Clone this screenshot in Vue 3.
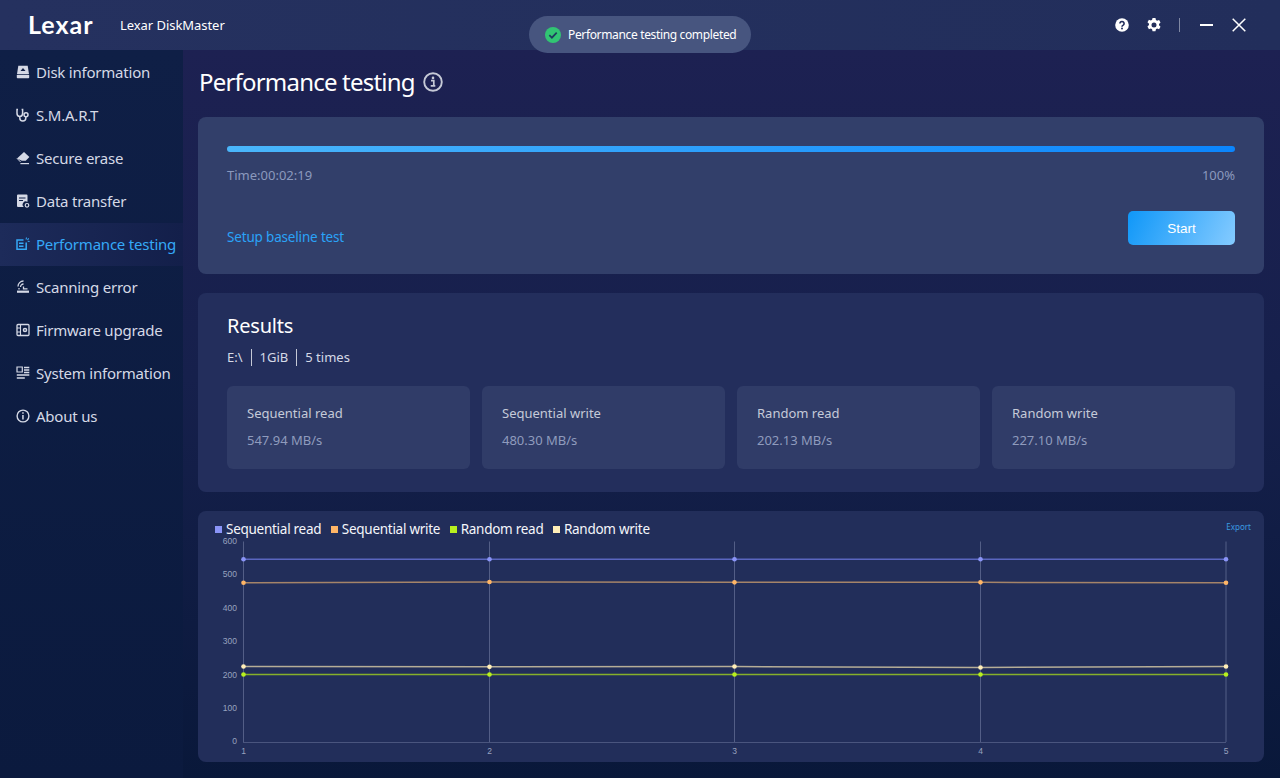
<script setup>
const navItems = [
  { label: 'Disk information', icon: 'disk' },
  { label: 'S.M.A.R.T', icon: 'steth' },
  { label: 'Secure erase', icon: 'erase' },
  { label: 'Data transfer', icon: 'doc' },
  { label: 'Performance testing', icon: 'perf', active: true },
  { label: 'Scanning error', icon: 'scan' },
  { label: 'Firmware upgrade', icon: 'chip' },
  { label: 'System information', icon: 'sys' },
  { label: 'About us', icon: 'info' },
]
const stats = [
  { label: 'Sequential read', value: '547.94 MB/s' },
  { label: 'Sequential write', value: '480.30 MB/s' },
  { label: 'Random read', value: '202.13 MB/s' },
  { label: 'Random write', value: '227.10 MB/s' },
]
const xs = [45.5, 291.5, 536.5, 782.5, 1028]
const y = (v) => 231 - (v * 200.4) / 600
const series = [
  { name: 'Sequential read', color: '#8a94f7', line: '#5a66c0', vals: [547, 547, 547, 547, 547] },
  { name: 'Sequential write', color: '#ffb566', line: '#a58469', vals: [477, 479, 478, 478, 477] },
  { name: 'Random read', color: '#b8f01e', line: '#86b02a', vals: [202, 202, 202, 202, 202] },
  { name: 'Random write', color: '#ffeeb8', line: '#b5ad97', vals: [226, 225, 226, 223, 226] },
]
const pts = (s) => s.vals.map((v, i) => `${xs[i]},${y(v)}`).join(' ')
const yTicks = [0, 100, 200, 300, 400, 500, 600]
</script>

<template>
  <div class="app">
    <header class="topbar">
      <div class="brand">
        <span class="logo">Lexar</span>
        <span class="appname">Lexar DiskMaster</span>
      </div>
      <div class="controls">
        <svg class="ctl" width="14" height="14" viewBox="0 0 14 14">
          <circle cx="7" cy="7" r="6.8" fill="#fff" />
          <path d="M4.900 5.400a2.100 2 0 1 1 3.300 1.700c-.8.500-1.200.9-1.200 1.600" fill="none" stroke="#232f5c" stroke-width="1.600" />
          <circle cx="7" cy="10.600" r="1" fill="#232f5c" />
        </svg>
        <svg class="ctl gear" width="14" height="14" viewBox="0 0 24 24">
          <path fill="#fff" fill-rule="evenodd" d="M9.500 0h5l.8 3.400 2 1.100 3.400-1 2.500 4.300-2.600 2.400v2.300l2.600 2.400-2.500 4.300-3.400-1-2 1.100-.8 3.400h-5l-.8-3.400-2-1.100-3.400 1L.8 14.500l2.600-2.400V9.800L.8 7.400l2.500-4.300 3.400 1 2-1.100zM12 7.500a4.300 4.300 0 1 0 0 8.600 4.300 4.300 0 0 0 0-8.600z" />
        </svg>
        <span class="sep"></span>
        <span class="minimize"></span>
        <svg width="14" height="14" viewBox="0 0 14 14" class="close">
          <path d="M.7.7l12.600 12.600M13.300.7L.7 13.300" stroke="#fff" stroke-width="1.500" fill="none" />
        </svg>
      </div>
    </header>

    <div class="toast">
      <svg width="16" height="16" viewBox="0 0 16 16">
        <circle cx="8" cy="8" r="8" fill="#31c573" />
        <path d="M4.300 8.200l2.600 2.500 4.800-5" stroke="#1f3b5f" stroke-width="1.700" fill="none" />
      </svg>
      <span>Performance testing completed</span>
    </div>

    <div class="body">
      <nav class="sidebar">
        <a v-for="item in navItems" :key="item.label" class="nav-item" :class="{ active: item.active }">
          <svg class="nav-icon" width="14" height="14" viewBox="0 0 14 14">
            <template v-if="item.icon === 'disk'">
              <path d="M2.300.8h9.400l1.300 8.200H1z" fill="currentColor" />
              <path d="M7 3l2.500 3h-5z" fill="#0f1e45" />
              <rect x=".8" y="9.800" width="12.400" height="3.500" rx=".8" fill="currentColor" />
            </template>
            <template v-else-if="item.icon === 'steth'">
              <path d="M2 1.500H1v3.800c0 1.900 1.300 3.200 2.800 3.200s2.800-1.300 2.800-3.200V1.500h-1M3.800 8.500v1.500c0 1.900 1.300 3 3 3s3-1.200 3-3V8.300" fill="none" stroke="currentColor" stroke-width="1.500" />
              <circle cx="10" cy="6.700" r="2" fill="none" stroke="currentColor" stroke-width="1.500" />
            </template>
            <template v-else-if="item.icon === 'erase'">
              <path d="M8 1l5.400 5-3.700 3.800H5.800L1 7.400z" fill="currentColor" />
              <path d="M4.400 12.600h8.600" stroke="currentColor" stroke-width="1.200" />
              <path d="M1 7.400l3.600 3.600" stroke="currentColor" stroke-width="1" />
            </template>
            <template v-else-if="item.icon === 'doc'">
              <path d="M1 1.500a1 1 0 0 1 1-1h8.500a1 1 0 0 1 1 1v6.300a3.200 3.200 0 0 0-3.700 5.200H2a1 1 0 0 1-1-1z" fill="currentColor" />
              <path d="M3 4h6.500M3 6.500h4" stroke="#0f1e45" stroke-width="1.100" />
              <circle cx="11" cy="11.300" r="1.800" fill="none" stroke="currentColor" stroke-width="1.200" />
            </template>
            <template v-else-if="item.icon === 'perf'">
              <path d="M10.200 5.500v6.800H1V3h6.500" fill="none" stroke="currentColor" stroke-width="1.500" />
              <path d="M3 5.500h4.500v1.400H3zM3 8.500h4.500v1.400H3z" fill="currentColor" />
              <path d="M10.500.5l-.4 2M12.700 1.400l-1.200 1.500M13.600 4.500l-1.900-.2" stroke="currentColor" stroke-width="1.100" />
            </template>
            <template v-else-if="item.icon === 'scan'">
              <path d="M1 12.800h12v-2.200H1z" fill="currentColor" />
              <path d="M3 9.500V8M2 6.500a5.500 5.500 0 0 1 5.500-5.500M4.500 7a3 3 0 0 1 3-3M7.500 6.500v2.300h4" fill="none" stroke="currentColor" stroke-width="1.300" />
            </template>
            <template v-else-if="item.icon === 'chip'">
              <rect x="1" y="1.500" width="12" height="11" rx="1" fill="none" stroke="currentColor" stroke-width="1.300" />
              <path d="M1 5h3.500M1 9h3.500M4.500 1.500v11" stroke="currentColor" stroke-width="1.100" />
              <circle cx="9" cy="7" r="2.300" fill="currentColor" />
              <circle cx="9" cy="7" r=".8" fill="#0f1e45" />
            </template>
            <template v-else-if="item.icon === 'sys'">
              <path d="M1 1h5.300v5H1z" fill="none" stroke="currentColor" stroke-width="1.200" />
              <path d="M8 1.500h5.300M8 4h5.300M8 6.500h5.300M.8 9h12.500M.8 12h8" stroke="currentColor" stroke-width="1.300" />
            </template>
            <template v-else>
              <circle cx="7" cy="7" r="5.900" fill="none" stroke="currentColor" stroke-width="1.400" />
              <path d="M6.200 6h1.500v4.500H6.200zM6.200 3.300h1.500v1.500H6.200z" fill="currentColor" />
            </template>
          </svg>
          <span>{{ item.label }}</span>
        </a>
      </nav>

      <main class="main">
        <div class="page-title">
          <h1>Performance testing</h1>
          <svg width="20" height="20" viewBox="0 0 20 20">
            <circle cx="10" cy="10" r="8.800" fill="none" stroke="#c5c9d6" stroke-width="1.900" />
            <path d="M8 8.700h2.800v4.800M7.700 13.800h4.600" fill="none" stroke="#c5c9d6" stroke-width="1.700" />
            <circle cx="10" cy="5.900" r="1.300" fill="#c5c9d6" />
          </svg>
        </div>

        <section class="card progress-card">
          <div class="bar"></div>
          <div class="bar-meta">
            <span>Time:00:02:19</span>
            <span>100%</span>
          </div>
          <div class="actions">
            <a class="link">Setup baseline test</a>
            <button class="start">Start</button>
          </div>
        </section>

        <section class="card results">
          <h2>Results</h2>
          <div class="meta">
            <span>E:\</span><span>1GiB</span><span>5 times</span>
          </div>
          <div class="stats">
            <div v-for="s in stats" :key="s.label" class="stat">
              <div class="stat-label">{{ s.label }}</div>
              <div class="stat-value">{{ s.value }}</div>
            </div>
          </div>
        </section>

        <section class="card chart">
          <div class="legend">
            <span v-for="s in series" :key="s.name" class="legend-item">
              <i class="swatch" :style="{ background: s.color }"></i>{{ s.name }}
            </span>
          </div>
          <a class="export">Export</a>
          <svg class="plot" width="1066" height="251" viewBox="0 0 1066 251">
            <line v-for="x in xs" :key="x" :x1="x" :x2="x" y1="30.500" y2="231" stroke="#535e86" stroke-width="1" />
            <line x1="45" x2="1028" y1="231.500" y2="231.500" stroke="#4a557e" stroke-width="1" />
            <text v-for="t in yTicks" :key="t" class="tick" x="39" :y="y(t) + 2.300" text-anchor="end">{{ t }}</text>
            <text v-for="(x, i) in xs" :key="'x' + i" class="tick" :x="x" y="243" text-anchor="middle">{{ i + 1 }}</text>
            <g v-for="s in series" :key="s.name">
              <polyline :points="pts(s)" fill="none" :stroke="s.line" stroke-width="1.500" />
              <circle v-for="(v, i) in s.vals" :key="i" :cx="xs[i]" :cy="y(v)" r="2.300" :fill="s.color" />
            </g>
          </svg>
        </section>
      </main>
    </div>
  </div>
</template>

<style scoped>
.app {
  position: relative;
  width: 1280px;
  height: 778px;
  overflow: hidden;
  display: flex;
  flex-direction: column;
  font-family: "Noto Sans", "Open Sans", sans-serif;
  color: #fff;
}
.topbar {
  height: 50px;
  flex: none;
  display: flex;
  align-items: center;
  justify-content: space-between;
  background: linear-gradient(90deg, #25315f, #222e5b);
  padding: 0 34px 0 28px;
}
.brand { display: flex; align-items: center; }
.logo {
  font-family: Lato, sans-serif;
  font-size: 25px;
  font-weight: 700;
  letter-spacing: 1px;
  width: 92px;
  line-height: 48px;
  padding-bottom: 2px;
}
.appname { font-size: 13px; letter-spacing: -.05px; }
.controls { display: flex; align-items: center; }
.gear { margin-left: 18px; }
.sep { width: 1px; height: 14px; background: #8088a3; margin-left: 18px; }
.minimize { width: 13px; height: 1.500px; background: #fff; margin-left: 20px; }
.close { margin-left: 19px; }
.toast {
  position: absolute;
  left: 529px;
  top: 16px;
  width: 222px;
  height: 37px;
  border-radius: 18.500px;
  background: #47557f;
  display: flex;
  align-items: center;
  gap: 7px;
  padding-left: 16px;
  box-sizing: border-box;
  font-size: 12px;
  letter-spacing: -.35px;
}
.body { flex: 1; display: flex; min-height: 0; }
.sidebar {
  width: 183px;
  flex: none;
  padding-top: 1px;
  box-sizing: border-box;
  background: linear-gradient(180deg, #0f1f46, #0b1a3e);
  display: flex;
  flex-direction: column;
}
.nav-item {
  height: 43px;
  flex: none;
  display: flex;
  align-items: center;
  gap: 6px;
  padding: 0 0 1px 16px;
  box-sizing: border-box;
  font-size: 15px;
  letter-spacing: -.22px;
  color: #d5d9e6;
}
.nav-item.active {
  color: #35a9f7;
  background: linear-gradient(90deg, #1d2b5a, #131f4a);
}
.nav-icon { flex: none; color: #d5d9e6; }
.active .nav-icon { color: #35a9f7; }
.main {
  flex: 1;
  min-width: 0;
  padding: 0 16px 0 15px;
  background: linear-gradient(180deg, #1d2152 0%, #16204c 45%, #09183a 100%);
  display: flex;
  flex-direction: column;
}
.page-title {
  height: 67px;
  flex: none;
  display: flex;
  align-items: center;
  gap: 8px;
  padding: 0 0 3px 1px;
  box-sizing: border-box;
}
.page-title h1 { margin: 0; font-size: 24px; font-weight: 400; line-height: 1; letter-spacing: -.8px; }
.card { border-radius: 8px; box-sizing: border-box; flex: none; }
.progress-card {
  height: 157px;
  background: #323f6a;
  padding: 29px 29px 0;
}
.bar {
  height: 6px;
  border-radius: 3px;
  background: linear-gradient(90deg, #4ab6fb, #0b85fd);
}
.bar-meta {
  margin-top: 14px;
  display: flex;
  justify-content: space-between;
  font-size: 13px;
  line-height: 18px;
  color: #8b99bd;
}
.actions {
  margin-top: 27px;
  display: flex;
  justify-content: space-between;
  align-items: flex-end;
}
.link { color: #2aa3f8; font-size: 13.500px; letter-spacing: -.17px; line-height: 16px; }
.start {
  width: 107px;
  height: 34px;
  border: 0;
  border-radius: 5px;
  background: linear-gradient(115deg, #0f97f8, #85cbff);
  color: #fff;
  font-family: "Liberation Sans", sans-serif;
  font-size: 13.500px;
  padding: 0;
}
.results {
  margin-top: 19px;
  height: 199px;
  background: #232e5c;
  padding: 19px 29px 0;
}
.results h2 { margin: 0; font-size: 20px; font-weight: 400; line-height: 28px; letter-spacing: -.2px; }
.meta { margin-top: 9px; display: flex; font-size: 13px; line-height: 17px; color: #d5d9e6; }
.meta span + span { margin-left: 8px; padding-left: 8px; border-left: 1px solid #c5c9d6; }
.stats { margin-top: 20px; display: grid; grid-template-columns: repeat(4, 243px); gap: 12px; }
.stat {
  height: 83px;
  border-radius: 6px;
  background: #303c68;
  padding: 17px 20px 0;
  box-sizing: border-box;
  font-size: 13px;
  line-height: 20px;
}
.stat-label { color: #c5cad8; }
.stat-value { margin-top: 7px; color: #8f9bbd; }
.chart {
  position: relative;
  margin-top: 19px;
  height: 251px;
  background: #222e5a;
}
.legend {
  position: absolute;
  left: 17px;
  top: 12px;
  display: flex;
  gap: 9.500px;
  font-size: 13.500px;
  letter-spacing: -.27px;
  line-height: 13px;
  color: #f5f6fb;
  z-index: 1;
}
.legend-item { display: flex; align-items: center; gap: 4px; }
.swatch { width: 7px; height: 7px; display: block; }
.export {
  position: absolute;
  right: 13px;
  top: 10px;
  font-size: 8px;
  line-height: 12px;
  color: #3a9be0;
}
.plot { display: block; }
.tick { font-family: "Liberation Sans", sans-serif; font-size: 8.500px; fill: #98a2bf; }
</style>
